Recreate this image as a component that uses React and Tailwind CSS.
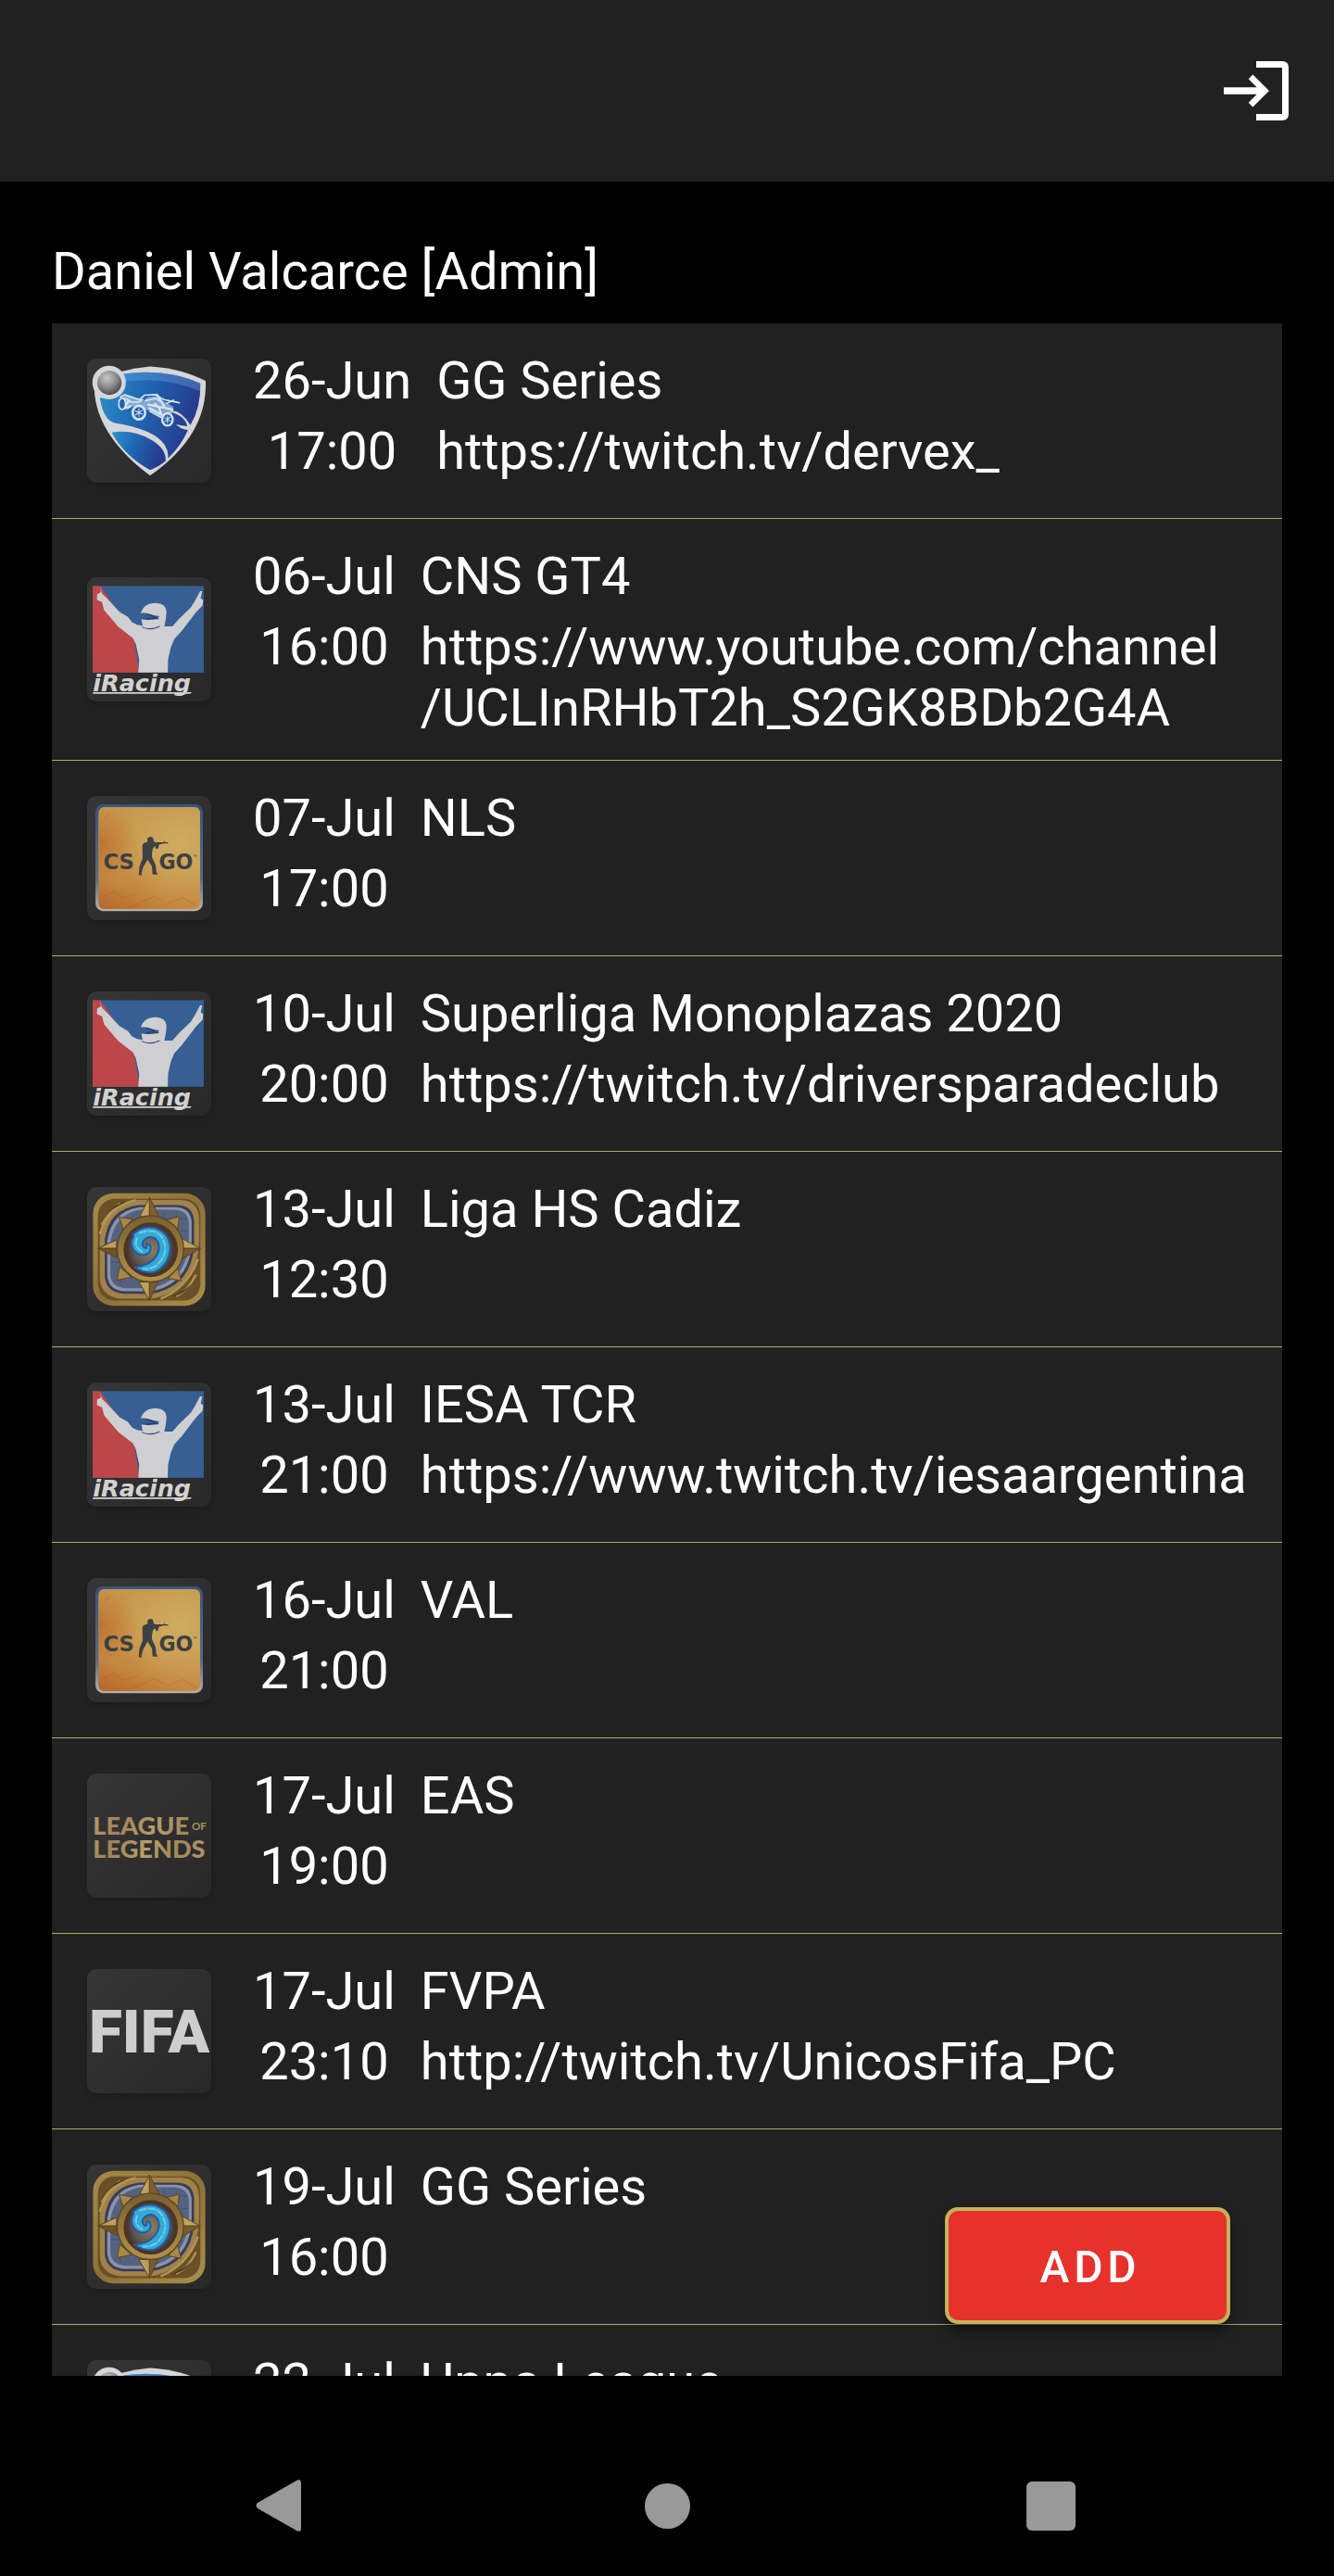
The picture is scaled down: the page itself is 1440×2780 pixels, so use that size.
import React from "react";

function LoginIcon() {
  return (
    <svg viewBox="0 0 70 64" className="h-16 w-[70px]" fill="white" aria-hidden="true">
      <path d="M35 0H63Q70 0 70 7V57Q70 64 63 64H35V57H63V7H35Z" />
      <path d="M0 28.3H35.7L26.7 19.3L31.4 14.6L49 32L31.4 49.4L26.7 44.7L35.7 35.7H0Z" />
    </svg>
  );
}

function RocketLeagueLogo() {
  return (
    <svg viewBox="43 52 400 400" className="size-full" role="img" aria-label="Rocket League">
      <defs>
        <linearGradient id="rl-blue" x1="0" y1="0" x2="1" y2="0.25">
          <stop offset="0" stopColor="#2b93cb" />
          <stop offset="0.45" stopColor="#1f68b4" />
          <stop offset="1" stopColor="#263b8c" />
        </linearGradient>
        <radialGradient id="rl-ball" cx="0.4" cy="0.3" r="0.75">
          <stop offset="0" stopColor="#c9c9c9" />
          <stop offset="0.5" stopColor="#8e8e8e" />
          <stop offset="1" stopColor="#444" />
        </radialGradient>
      </defs>
      <path d="M66 128Q150 84 246 77Q350 84 425 124Q432 300 246 429Q60 290 66 128Z" fill="#d5d6d9" />
      <path d="M84 178Q130 186 160 150Q170 120 158 101Q300 82 408 132Q410 210 376 266Q340 210 306 222Q360 236 366 270Q350 268 330 264Q345 280 368 282Q348 330 304 374Q308 310 214 279Q170 264 136 260Q96 254 84 178Z" fill="url(#rl-blue)" />
      <path d="M158 101Q300 82 408 132L408 158Q300 108 166 126Z" fill="#6aa0dc" opacity="0.4" />
      <path d="M122 290Q190 278 250 314Q300 344 296 382Q272 402 246 411Q164 366 122 290Z" fill="url(#rl-blue)" />
      <path d="M146 184L166 168L206 182L224 188L240 176L268 174L290 190L320 206L318 226L280 240L230 214L176 204L160 208Z" fill="#d5e4ef" opacity="0.55" />
      <g fill="none" stroke="#d5e4ef" strokeWidth="6" strokeLinecap="round">
        <path d="M150 176L164 168L212 184L228 170L262 168L290 184L340 194" strokeWidth="5" />
        <path d="M146 188Q166 176 182 190Q206 198 222 184M232 188L262 180L284 192" strokeWidth="5" />
        <path d="M150 206Q164 216 182 206M176 190L160 212" strokeWidth="8" />
        <path d="M240 200L318 216M244 212L282 232L276 212L262 198M268 168L292 206" strokeWidth="7" />
        <path d="M246 222L286 244M300 196L322 186" strokeWidth="5" />
      </g>
      <g fill="#1f5fae" stroke="#d5e4ef">
        <ellipse cx="210" cy="226" rx="20" ry="22" strokeWidth="8" />
        <ellipse cx="302" cy="248" rx="17" ry="20" strokeWidth="7" />
        <path d="M210 212V240M198 220L222 232M222 218L198 234M302 236V260M292 242L312 254M312 240L292 256" strokeWidth="3" />
        <ellipse cx="156" cy="198" rx="11" ry="18" strokeWidth="5" />
      </g>
      <circle cx="114" cy="129" r="54" fill="#d5d6d9" />
      <circle cx="115" cy="130" r="39" fill="url(#rl-ball)" />
    </svg>
  );
}

function IRacingLogo() {
  return (
    <svg viewBox="43 39 400 400" className="size-full" role="img" aria-label="iRacing">
      <rect x="61" y="67" width="358" height="279" fill="#365f94" />
      <path d="M61 67H86L191 220L212 346H61Z" fill="#bd4648" />
      <path d="M84 67L91 91L104 104L148 151L174 166L188 184L204 192L222 195L218 174L240 175L270 172L276 164L250 160L216 155Q226 122 264 122Q298 124 299 150L297 172L292 197H318L339 173L377 137L390 116L407 84H414L409 106L417 112L415 130L394 152L349 211L324 238L313 264L304 304L303 346H208L211 304L200 254L191 235L143 198L98 145L91 119L75 112V94L88 87Z" fill="#cfcfd1" />
      <path d="M216 155Q240 150 276 173L240 176L218 173Q245 169 255 167Q238 158 216 155Z" fill="#244676" />
      <path d="M219 199Q246 212 277 197" fill="none" stroke="#3b4480" strokeWidth="3" />
      <text x="62" y="405" fontSize="76" fontFamily="DejaVu Sans, sans-serif" fontWeight="700" fontStyle="italic" fill="#d2d2d2">iRacing</text>
      <path d="M62 409H380L376 414H61Z" fill="#d2d2d2" />
    </svg>
  );
}

function CsgoLogo() {
  return (
    <svg viewBox="43 43 400 400" className="size-full" role="img" aria-label="CS:GO">
      <defs>
        <linearGradient id="cs-edge" x1="0" y1="0" x2="0" y2="1">
          <stop offset="0" stopColor="#38547f" />
          <stop offset="0.7" stopColor="#5a6b85" />
          <stop offset="1" stopColor="#b9b3ad" />
        </linearGradient>
        <linearGradient id="cs-sand" x1="0.1" y1="1" x2="0.5" y2="0">
          <stop offset="0" stopColor="#b9682c" />
          <stop offset="0.25" stopColor="#c4883f" />
          <stop offset="0.65" stopColor="#c99b50" />
          <stop offset="1" stopColor="#c3964b" />
        </linearGradient>
        <radialGradient id="cs-glow" cx="0.8" cy="0.35" r="0.6">
          <stop offset="0" stopColor="#d0ab60" />
          <stop offset="1" stopColor="#d0ab60" stopOpacity="0" />
        </radialGradient>
        <radialGradient id="cs-rust" cx="0" cy="0.35" r="0.4">
          <stop offset="0" stopColor="#bf7433" />
          <stop offset="1" stopColor="#bf7433" stopOpacity="0" />
        </radialGradient>
      </defs>
      <rect x="70" y="70" width="346" height="344" rx="25" fill="url(#cs-edge)" />
      <rect x="80" y="79" width="327" height="328" rx="18" fill="url(#cs-sand)" />
      <rect x="80" y="79" width="327" height="328" rx="18" fill="url(#cs-glow)" />
      <rect x="80" y="79" width="327" height="328" rx="18" fill="url(#cs-rust)" />
      <g fill="none" stroke="#b25c28" strokeWidth="3" opacity="0.35">
        <path d="M92 370L130 350L160 372L210 356M180 402L260 366L290 384M300 390L350 370L396 396M96 120L116 100M90 180L108 210" />
      </g>
      <g fill="#3c4142">
        <path d="M237 181Q244 170 255 177L258 189L262 192H290L292 188L295 192H304V196H290L275 200L272 212L265 214L262 204L255 212L252 228V240L264 266L266 288L271 296H254L252 270L238 248L224 272L218 292L220 298H209L212 270L222 244L221 204Q222 194 238 191Z" />
        <text x="95" y="279" fontSize="68" fontFamily="DejaVu Sans, sans-serif" fontWeight="700">CS</text>
        <text x="274" y="279" fontSize="66" fontFamily="DejaVu Sans, sans-serif" fontWeight="700">GO</text>
      </g>
      <path d="M386 233H391M388.500 233V239M392 239V233L394 236L396 233V239" fill="none" stroke="#3c4142" />
    </svg>
  );
}

function HearthstoneLogo() {
  return (
    <svg viewBox="43 48 400 400" className="size-full" role="img" aria-label="Hearthstone">
      <defs>
        <linearGradient id="hs-gold" x1="0" y1="0" x2="1" y2="1">
          <stop offset="0" stopColor="#a78b48" />
          <stop offset="0.5" stopColor="#8d7038" />
          <stop offset="1" stopColor="#a98f4c" />
        </linearGradient>
        <linearGradient id="hs-ring" x1="0" y1="0" x2="0" y2="1">
          <stop offset="0" stopColor="#79602f" />
          <stop offset="1" stopColor="#b0904c" />
        </linearGradient>
        <radialGradient id="hs-core" cx="0.5" cy="0.5" r="0.5">
          <stop offset="0" stopColor="#8d8060" />
          <stop offset="0.7" stopColor="#5d5550" />
          <stop offset="1" stopColor="#433329" />
        </radialGradient>
      </defs>
      <rect x="62" y="68" width="362" height="363" rx="66" fill="url(#hs-gold)" />
      <rect x="78" y="86" width="330" height="328" rx="54" fill="#6a4f27" />
      <path d="M84 210Q100 100 205 90H346Q400 92 404 150V220Q400 380 250 408H150Q86 400 84 340Z" fill="#a0834a" />
      <path d="M100 218Q112 118 210 106H334Q388 108 388 164V240Q376 370 250 392H160Q104 386 100 336Z" fill="#3b3d50" />
      <path d="M108 222Q122 126 212 113H330Q380 116 380 166V240Q366 362 250 384H162Q112 380 108 334Z" fill="#8992ae" />
      <path d="M118 226Q132 134 214 121H326Q371 124 371 170V240Q356 352 248 374H166Q120 370 118 330Z" fill="#55627f" />
      <g fill="none" stroke="#46536f" strokeWidth="3">
        <path d="M290 130V160M330 134V180M300 150H366M118 290H160M150 320V366M346 190H370" />
      </g>
      <path d="M84 200Q110 110 200 90M90 170Q120 120 150 100M400 280Q370 370 280 408M394 330Q370 380 330 400" fill="none" stroke="#b29652" strokeWidth="7" />
      <path d="M104 138Q130 100 170 96Q126 116 104 138ZM380 360Q356 396 314 402Q360 380 380 360Z" fill="#4c3920" />
      <g stroke="#5e4623" strokeWidth="3" strokeLinejoin="round">
        <path d="M244 82L214 140L244 160Z" fill="#c0a35a" />
        <path d="M244 82L274 140L244 160Z" fill="#7c6031" />
        <path d="M78 246L138 218V246Z" fill="#bea15a" />
        <path d="M78 246L138 276V246Z" fill="#6e532a" />
        <path d="M408 246L348 214V246Z" fill="#c0a45d" />
        <path d="M408 246L348 280V246Z" fill="#775b2e" />
        <path d="M244 414L210 354H244Z" fill="#bba05b" />
        <path d="M244 414L272 354H244Z" fill="#765b2f" />
        <path d="M146 145L190 152L160 186Z" fill="#a68949" />
        <path d="M340 144L334 190L296 154Z" fill="#a68949" />
        <path d="M140 348L148 304L186 338Z" fill="#a68949" />
        <path d="M346 350L304 342L334 306Z" fill="#a68949" />
      </g>
      <circle cx="247" cy="247" r="109" fill="#5d4523" />
      <circle cx="247" cy="247" r="105" fill="url(#hs-ring)" />
      <circle cx="248" cy="252" r="88" fill="#c5a45b" />
      <circle cx="248" cy="250" r="88" fill="#51351f" />
      <circle cx="248" cy="250" r="80" fill="url(#hs-core)" />
      <path d="M212 185Q250 170 280 188Q310 206 311 246Q306 302 260 322Q228 328 196 307Q242 302 262 276Q284 246 268 220Q248 198 224 222Q216 240 233 246L236 230Q252 234 246 255Q230 274 208 264Q182 248 188 218Q196 204 190 200Z" fill="#35a9d4" stroke="#255baa" strokeWidth="6" strokeLinejoin="round" />
      <path d="M212 196Q262 178 286 212Q310 260 268 300Q248 314 224 312M204 214Q192 240 220 256" fill="none" stroke="#69cfe4" strokeWidth="6" strokeLinecap="round" strokeDasharray="22 8" />
    </svg>
  );
}

function LeagueOfLegendsLogo() {
  return (
    <svg viewBox="43 43 400 400" className="size-full" role="img" aria-label="League of Legends">
      <defs>
        <linearGradient id="lol-gold" gradientUnits="userSpaceOnUse" x1="68" y1="180" x2="427" y2="317">
          <stop offset="0" stopColor="#b8976b" />
          <stop offset="0.2" stopColor="#a18258" />
          <stop offset="0.5" stopColor="#b59d6c" />
          <stop offset="0.75" stopColor="#a18757" />
          <stop offset="1" stopColor="#b2946a" />
        </linearGradient>
      </defs>
      <g fill="url(#lol-gold)" fontFamily="Lato, sans-serif">
        <text x="62" y="241" fontSize="81" fontWeight="900">LEAGUE</text>
        <text x="380" y="224" fontSize="35" fontWeight="700">OF</text>
        <text x="62" y="316" fontSize="81" fontWeight="900">LEGENDS</text>
      </g>
    </svg>
  );
}

function FifaLogo() {
  return (
    <svg viewBox="43 46 400 400" className="size-full" role="img" aria-label="FIFA">
      <text x="243" y="315" textAnchor="middle" fontSize="196" fontFamily="Roboto, sans-serif" fontWeight="900" fill="#cecece">FIFA</text>
    </svg>
  );
}

const logos = {
  rocket: RocketLeagueLogo,
  iracing: IRacingLogo,
  csgo: CsgoLogo,
  hearthstone: HearthstoneLogo,
  lol: LeagueOfLegendsLogo,
  fifa: FifaLogo,
};

const events = [
  { game: "rocket", date: "26-Jun", time: "17:00", title: "GG Series", link: "https://twitch.tv/dervex_" },
  { game: "iracing", date: "06-Jul", time: "16:00", title: "CNS GT4", link: "https://www.youtube.com/channel", rest: "/UCLInRHbT2h_S2GK8BDb2G4A" },
  { game: "csgo", date: "07-Jul", time: "17:00", title: "NLS" },
  { game: "iracing", date: "10-Jul", time: "20:00", title: "Superliga Monoplazas 2020", link: "https://twitch.tv/driversparadeclub" },
  { game: "hearthstone", date: "13-Jul", time: "12:30", title: "Liga HS Cadiz" },
  { game: "iracing", date: "13-Jul", time: "21:00", title: "IESA TCR", link: "https://www.twitch.tv/iesaargentina" },
  { game: "csgo", date: "16-Jul", time: "21:00", title: "VAL" },
  { game: "lol", date: "17-Jul", time: "19:00", title: "EAS" },
  { game: "fifa", date: "17-Jul", time: "23:10", title: "FVPA", link: "http://twitch.tv/UnicosFifa_PC" },
  { game: "hearthstone", date: "19-Jul", time: "16:00", title: "GG Series" },
  { game: "rocket", date: "22-Jul", title: "Uppa League" },
];

function EventRow({ event }) {
  const Logo = logos[event.game];
  return (
    <li className="flex min-h-[211px] shrink-0 items-center border-b border-[#b5a868] pl-[38px]">
      <div className="size-[134px] shrink-0 overflow-hidden rounded-[10px] bg-linear-to-br from-[#363636] to-[#282828] shadow-md">
        <Logo />
      </div>
      <div className="ml-[45px] flex min-w-0 flex-1 gap-[27px] self-start pt-[29px] pb-[23px]">
        <div className="flex shrink-0 flex-col items-center gap-[10px]">
          <p>{event.date}</p>
          {event.time && <p>{event.time}</p>}
        </div>
        <div className="flex min-w-0 flex-1 flex-col gap-[10px]">
          <p>{event.title}</p>
          {event.link && (
            <a href={event.link + (event.rest ?? "")}>
              {event.link}
              <wbr />
              {event.rest}
            </a>
          )}
        </div>
      </div>
    </li>
  );
}

export default function App() {
  return (
    <div className="flex h-screen flex-col bg-black font-['Roboto',sans-serif] text-[56px] leading-[66px] text-white">
      <header className="flex h-[196px] shrink-0 items-center justify-end bg-[#212121] px-[49px]">
        <button type="button" aria-label="Log out">
          <LoginIcon />
        </button>
      </header>
      <main className="flex min-h-0 flex-1 flex-col px-14 pt-16">
        <h1 className="mb-[23px]">Daniel Valcarce [Admin]</h1>
        <div className="relative flex min-h-0 flex-1 flex-col">
          <ul className="min-h-0 flex-1 overflow-y-auto bg-[#212121] [scrollbar-width:none]">
            {events.map((event) => (
              <EventRow key={event.date + event.title} event={event} />
            ))}
          </ul>
          <button
            type="button"
            className="absolute right-14 bottom-14 h-[126px] w-[308px] rounded-[14px] border-4 border-[#c4b25f] bg-[#e7312b] pt-1 pl-1.5 text-5xl font-medium tracking-widest shadow-lg shadow-black/50"
          >
            ADD
          </button>
        </div>
      </main>
      <nav aria-label="System" className="mt-16 grid h-[152px] shrink-0 grid-cols-3 items-center justify-items-center px-[99px]">
        <button type="button" aria-label="Back">
          <svg viewBox="0 0 60 60" className="size-[60px]" fill="#999">
            <path d="M45 2.5Q49 1 49 6V54Q49 59 45 57.5L2 33Q-1 30 2 27Z" />
          </svg>
        </button>
        <button type="button" aria-label="Home" className="size-[49px] rounded-full bg-[#999]" />
        <button type="button" aria-label="Recent apps" className="size-[53px] rounded-md bg-[#999]" />
      </nav>
    </div>
  );
}
